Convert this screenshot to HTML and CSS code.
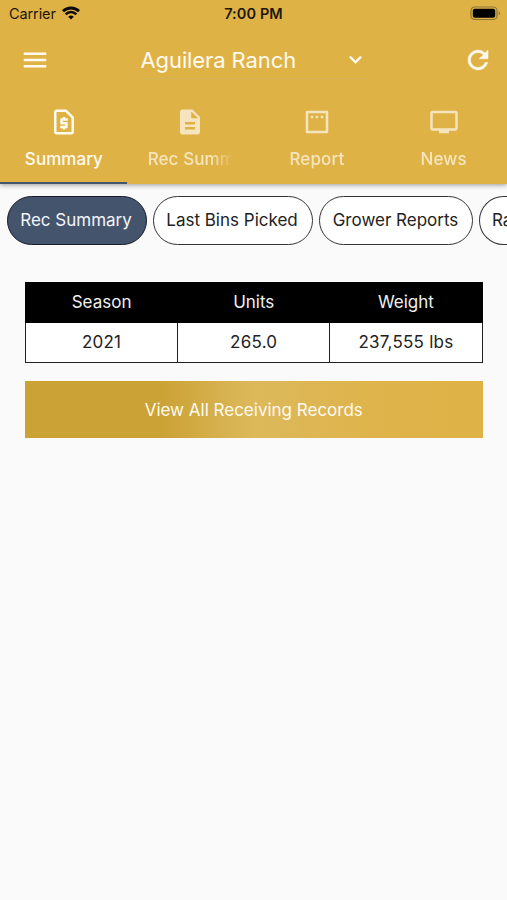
FILE: index.html
```html
<!DOCTYPE html>
<html lang="en">
<head>
    <meta charset="UTF-8">
    <title>Aguilera Ranch</title>
    <link rel="stylesheet" href="styles.css">
</head>
<body>
<header class="header">
    <div class="status_bar">
        <div class="status_left">
            <span class="carrier">Carrier</span>
            <svg class="wifi" viewBox="0 0 18 14">
                <path d="M1 5.2 A11.5 11.5 0 0 1 17 5.2" fill="none" stroke="#0c0a04" stroke-width="2.9"/>
                <path d="M3.7 8.3 A7.3 7.3 0 0 1 14.3 8.3" fill="none" stroke="#0c0a04" stroke-width="2.5"/>
                <path d="M6.2 10.8 A4 4 0 0 1 11.8 10.8 L9 13.6z" fill="#0c0a04"/>
            </svg>
        </div>
        <span class="time">7:00 PM</span>
        <svg class="battery" viewBox="0 0 31 15">
            <rect x="1" y="1" width="26" height="12.5" rx="3.6" fill="none" stroke="#8e7433" stroke-width="1.2"/>
            <rect x="2.8" y="2.8" width="22.4" height="8.9" rx="2" fill="#000"/>
            <path d="M28.7 5.2q2.6 2 0 4.2z" fill="#8e7433"/>
        </svg>
    </div>
    <div class="app_bar">
        <svg class="icon" viewBox="0 0 24 24"><path d="M3 18h18v-2H3v2zm0-5h18v-2H3v2zm0-7v2h18V6H3z"/></svg>
        <div class="ranch_select">
            <span class="ranch_name">Aguilera Ranch</span>
            <svg class="arrow" viewBox="0 0 24 24"><path d="M7.41 8.59L12 13.17l4.59-4.58L18 10l-6 6-6-6z"/></svg>
        </div>
        <svg class="icon" viewBox="0 0 24 24"><path d="M17.65 6.35A7.96 7.96 0 0 0 12 4a8 8 0 1 0 7.73 10h-2.08A6 6 0 1 1 12 6c1.66 0 3.14.69 4.22 1.78L13 11h7V4l-2.35 2.35z" stroke="#fffaf0" stroke-width=".4"/></svg>
    </div>
    <nav class="tabs">
        <div class="tab active">
            <svg class="icon" viewBox="0 0 24 24">
                <path fill-rule="evenodd" d="M14 2H6c-1.1 0-2 .9-2 2v16c0 1.1.9 2 2 2h12c1.1 0 2-.9 2-2V8l-6-6zM6 4h7.17L18 8.83V20H6V4z"/>
                <path d="M11 18h2v-1h1c.55 0 1-.45 1-1v-3c0-.55-.45-1-1-1h-3v-1h4V9h-2V8h-2v1h-1c-.55 0-1 .45-1 1v3c0 .55.45 1 1 1h3v1H9v2h2v1z"/>
            </svg>
            <span class="tab_label">Summary</span>
        </div>
        <div class="tab">
            <svg class="icon" viewBox="0 0 24 24"><path d="M14 2H6c-1.1 0-1.99.9-1.99 2L4 20c0 1.1.89 2 1.99 2H18c1.1 0 2-.9 2-2V8l-6-6zm2 16H8v-2h8v2zm0-4H8v-2h8v2zm-3-5V3.5L18.5 9H13z"/></svg>
            <span class="tab_label fade">Rec Summary</span>
        </div>
        <div class="tab">
            <svg class="icon" viewBox="0 0 24 24">
                <path fill-rule="evenodd" d="M4 3h16a1 1 0 0 1 1 1v16a1 1 0 0 1-1 1H4a1 1 0 0 1-1-1V4a1 1 0 0 1 1-1zm1 2v14h14V5z"/>
                <path d="M7 7h2v2H7zM11 7h2v2h-2zM15 7h2v2h-2z"/>
            </svg>
            <span class="tab_label">Report</span>
        </div>
        <div class="tab">
            <svg class="icon" viewBox="0 0 24 24"><path d="M21 3H3c-1.1 0-2 .9-2 2v12c0 1.1.9 2 2 2h5v2h8v-2h5c1.1 0 1.99-.9 1.99-2L23 5c0-1.1-.9-2-2-2zm0 14H3V5h18v12z"/></svg>
            <span class="tab_label">News</span>
        </div>
    </nav>
</header>
<div class="chips">
    <div class="chip chip_rec selected">Rec Summary</div>
    <div class="chip chip_bins">Last Bins Picked</div>
    <div class="chip chip_grower">Grower Reports</div>
    <div class="chip chip_ranch">Ra</div>
</div>
<main class="content">
    <table class="summary_table">
        <thead>
        <tr>
            <th>Season</th>
            <th>Units</th>
            <th>Weight</th>
        </tr>
        </thead>
        <tbody>
        <tr>
            <td>2021</td>
            <td>265.0</td>
            <td>237,555 lbs</td>
        </tr>
        </tbody>
    </table>
    <button class="view_all">View All Receiving Records</button>
</main>
</body>
</html>
```
FILE: styles.css
```css
* {
    margin: 0;
    padding: 0;
    box-sizing: border-box;
}

body {
    height: 900px;
    overflow: hidden;
    background-color: #fafafa;
    color: #222;
    font-family: Inter, "Liberation Sans", sans-serif;
    font-size: 17px;
}

.header {
    position: relative;
    height: 184px;
    background-color: #dfb246;
    box-shadow: 0 1px 5px rgba(0, 0, 0, .4);
}

.status_bar {
    display: grid;
    grid-template-columns: 1fr auto 1fr;
    align-items: center;
    height: 27px;
    padding: 0 6px 0 9px;
    color: #1c170a;
    font-size: 14.5px;
}
.status_left {
    display: flex;
    align-items: center;
    gap: 6px;
}
.carrier {
    letter-spacing: -.1px;
}
.wifi {
    width: 18px;
    height: 14px;
    margin-bottom: 2px;
}
.time {
    margin-right: 3px;
    font-weight: 600;
    letter-spacing: .1px;
}
.battery {
    width: 31px;
    height: 15px;
    justify-self: end;
}

.icon {
    display: block;
    width: 30px;
    height: 30px;
    fill: #fffaf0;
}

.app_bar {
    display: flex;
    justify-content: space-between;
    align-items: center;
    height: 66px;
    padding: 0 14px 0 20px;
}
.ranch_select {
    display: flex;
    justify-content: space-between;
    align-items: center;
    width: 227px;
    height: 38px;
    margin-right: 5px;
    border-bottom: 1px solid #d3b35b;
    color: #fffaf0;
    font-size: 22px;
}
.ranch_name {
    letter-spacing: -.1px;
}
.arrow {
    width: 25px;
    height: 25px;
    fill: #fffaf0;
    stroke: #fffaf0;
    stroke-width: .3;
}

.tabs {
    display: grid;
    grid-template-columns: repeat(4, 1fr);
    height: 91px;
}
.tab {
    display: flex;
    flex-direction: column;
    align-items: center;
    padding-top: 14px;
    color: #fffaf0;
    font-weight: 500;
    font-size: 17px;
    letter-spacing: .1px;
    opacity: .7;
}
.tab.active {
    padding-left: 1px;
    border-bottom: 2px solid #44546c;
    letter-spacing: .05px;
    opacity: 1;
}
.tab_label {
    margin-top: 11px;
    line-height: 22px;
    white-space: nowrap;
}
.fade {
    width: 85px;
    overflow: hidden;
    -webkit-mask-image: linear-gradient(to right, #000 75%, transparent);
    mask-image: linear-gradient(to right, #000 75%, transparent);
}

.chips {
    display: flex;
    gap: 6px;
    padding: 12px 0 0 7px;
    overflow: hidden;
}
.chip {
    flex: none;
    height: 49px;
    border: 1.3px solid #333;
    border-radius: 25px;
    background-color: #fff;
    line-height: 46px;
    text-align: center;
    white-space: nowrap;
}
.chip_rec {
    width: 140px;
    padding-right: 2px;
}
.chip_bins {
    width: 160px;
    padding-right: 2px;
}
.chip_grower {
    width: 154px;
    padding-right: 1px;
}
/* last one runs off to the right */
.chip_ranch {
    width: 28px;
    padding-left: 12px;
    border-right: none;
    border-radius: 25px 0 0 25px;
    text-align: left;
    overflow: hidden;
}
.chip.selected {
    border-color: #151c28;
    background-color: #44546c;
    color: #f2f5fa;
}

.content {
    padding: 37px 24.5px 0 25px;
}
.summary_table {
    width: 100%;
    border-collapse: collapse;
    table-layout: fixed;
}
.summary_table th {
    height: 40px;
    padding-bottom: 2px;
    border: 1px solid #000;
    background-color: #000;
    color: #f0f0f0;
    font-weight: 400;
}
.summary_table td {
    height: 40px;
    padding-bottom: 2px;
    border: 1px solid #222;
    background-color: #fff;
    text-align: center;
    letter-spacing: .25px;
}
.view_all {
    display: block;
    width: 100%;
    height: 57px;
    margin-top: 18px;
    border: none;
    background: linear-gradient(90deg, #cba236 0%, #cba236 30%, #ddb95b 50%, #deb34a 78%, #dfb246 100%);
    color: #fffaf0;
    font-family: inherit;
    font-size: 17px;
}
```
